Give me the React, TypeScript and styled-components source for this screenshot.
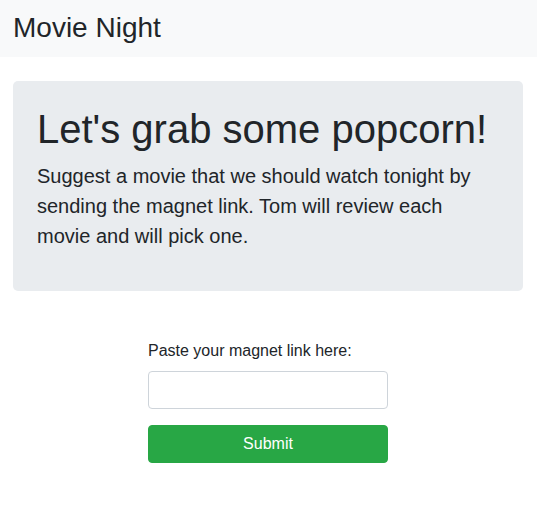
import React from "react";
import styled, { createGlobalStyle } from "styled-components";

const Global = createGlobalStyle`
  *, *::before, *::after { box-sizing: border-box; }
  html, body { margin: 0; padding: 0; background: #fff; }
  body {
    font-family: "Liberation Sans", Arial, sans-serif;
    font-size: 16px;
    line-height: 1.5;
    color: #212529;
  }
`;

const Navbar = styled.nav`
  height: 57px;
  background: #f8f9fa;
  display: flex;
  align-items: center;
  padding: 0 13px;
`;

const Brand = styled.span`
  font-size: 28px;
  line-height: 1.2;
  color: #212529;
  margin-top: -2px;
`;

const Container = styled.main`
  padding: 24px 14px 0 13px;
`;

const Jumbotron = styled.section`
  background: #e9ecef;
  border-radius: 5px;
  padding: 24px;
`;

const Heading = styled.h1`
  margin: 0 0 8px;
  font-size: 40px;
  font-weight: 400;
  line-height: 1.2;
`;

const Lead = styled.p`
  margin: 0 0 16px;
  font-size: 20px;
  font-weight: 300;
  line-height: 1.5;
`;

const Form = styled.form`
  width: 240px;
  margin: 48px auto 0;
  display: flex;
  flex-direction: column;
`;

const Label = styled.label`
  display: block;
  margin-bottom: 8px;
  font-size: 16px;
  line-height: 1.5;
`;

const Input = styled.input`
  display: block;
  width: 100%;
  height: 38px;
  padding: 6px 12px;
  font-family: inherit;
  font-size: 16px;
  color: #495057;
  background: #fff;
  border: 1px solid #ced4da;
  border-radius: 4px;
  margin: 0 0 16px;
  outline: none;
`;

const Button = styled.button`
  width: 100%;
  height: 38px;
  padding: 6px 12px;
  font-family: inherit;
  font-size: 16px;
  line-height: 1.5;
  color: #fff;
  background: #28a745;
  border: 1px solid #28a745;
  border-radius: 4px;
  cursor: pointer;
`;

export default function App() {
  return (
    <>
      <Global />
      <Navbar>
        <Brand>Movie Night</Brand>
      </Navbar>
      <Container>
        <Jumbotron>
          <Heading>Let's grab some popcorn!</Heading>
          <Lead>
            Suggest a movie that we should watch tonight by sending the magnet
            link. Tom will review each movie and will pick one.
          </Lead>
        </Jumbotron>
        <Form onSubmit={(e) => e.preventDefault()}>
          <Label htmlFor="magnet">Paste your magnet link here:</Label>
          <Input id="magnet" type="text" />
          <Button type="submit">Submit</Button>
        </Form>
      </Container>
    </>
  );
}
